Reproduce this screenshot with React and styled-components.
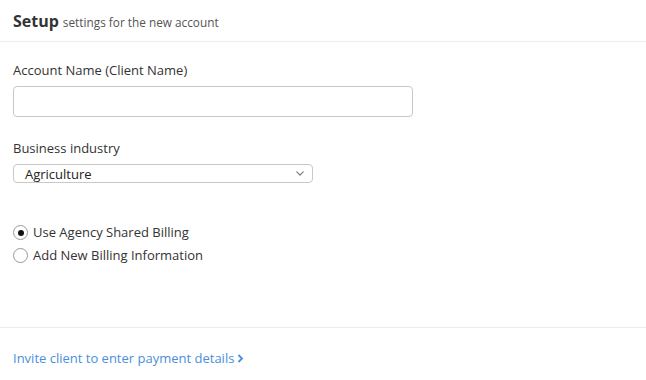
import styled, { createGlobalStyle } from 'styled-components';

const GlobalStyle = createGlobalStyle`
  html, body {
    margin: 0;
    padding: 0;
    background: #fff;
    font-family: 'Open Sans', 'Liberation Sans', sans-serif;
    color: #333;
  }
`;

const App = () => {
  return (
    <>
      <GlobalStyle />
      <Panel>
        <Header>
          <Title>Setup</Title>
          <Subtitle>settings for the new account</Subtitle>
        </Header>
        <Body>
          <Field>
            <Label>Account Name (Client Name)</Label>
            <TextInput type="text" />
          </Field>
          <Field>
            <Label>Business industry</Label>
            <SelectBox>
              <span>Agriculture</span>
              <Chevron viewBox="0 0 10 6">
                <path d="M1 1l4 4 4-4" fill="none" stroke="#777" strokeWidth="1.4" strokeLinecap="round" strokeLinejoin="round" />
              </Chevron>
            </SelectBox>
          </Field>
          <RadioGroup>
            <RadioRow>
              <Radio checked />
              <span>Use Agency Shared Billing</span>
            </RadioRow>
            <RadioRow>
              <Radio />
              <span>Add New Billing Information</span>
            </RadioRow>
          </RadioGroup>
        </Body>
        <Footer>
          <InviteLink href="#">
            Invite client to enter payment details
            <svg width="7" height="9" viewBox="0 0 7 9">
              <path d="M1.5 1l3.5 3.5-3.5 3.5" fill="none" stroke="#4a8fdb" strokeWidth="1.8" />
            </svg>
          </InviteLink>
        </Footer>
      </Panel>
    </>
  );
};

export default App;

const Panel = styled.div`
  width: 646px;
  height: 380px;
  display: flex;
  flex-direction: column;
  background: #fff;
`;

const Header = styled.div`
  display: flex;
  align-items: baseline;
  gap: 4px;
  padding: 10px 13px 9px;
  border-bottom: 1px solid #ececf0;
`;

const Title = styled.span`
  font-size: 16px;
  font-weight: 700;
  color: #333;
`;

const Subtitle = styled.span`
  font-size: 11.8px;
  color: #555;
`;

const Body = styled.div`
  flex: 1;
  padding: 19px 13px 0;
  display: flex;
  flex-direction: column;
  border-bottom: 1px solid #ececf0;
`;

const Field = styled.div`
  display: flex;
  flex-direction: column;
  gap: 6px;
  margin-bottom: 22px;
`;

const Label = styled.label`
  font-size: 13px;
  color: #333;
  line-height: 19px;
`;

const TextInput = styled.input`
  width: 400px;
  height: 31px;
  box-sizing: border-box;
  border: 1px solid #c8c8c8;
  border-radius: 4px;
  outline: none;
`;

const SelectBox = styled.div`
  width: 300px;
  height: 19px;
  box-sizing: border-box;
  border: 1px solid #c8c8c8;
  border-radius: 4px;
  display: flex;
  align-items: center;
  justify-content: space-between;
  padding: 0 8px 0 11px;
  font-size: 13px;
  color: #222;
`;

const Chevron = styled.svg`
  width: 8px;
  height: 5px;
`;

const RadioGroup = styled.div`
  display: flex;
  flex-direction: column;
  gap: 4px;
  margin-top: 18px;
`;

const RadioRow = styled.div`
  display: flex;
  align-items: center;
  gap: 5px;
  font-size: 13px;
  color: #333;
  line-height: 19px;
`;

const Radio = styled.span`
  width: 15px;
  height: 15px;
  box-sizing: border-box;
  border-radius: 50%;
  border: 1px solid #999;
  background: #fff;
  position: relative;

  &::after {
    content: '';
    display: ${p => (p.checked ? 'block' : 'none')};
    position: absolute;
    left: 3.5px;
    top: 3.5px;
    width: 6px;
    height: 6px;
    border-radius: 50%;
    background: #111;
  }
`;

const Footer = styled.div`
  height: 52px;
  padding: 21px 13px 0;
  box-sizing: border-box;
  display: flex;
  align-items: flex-start;
`;

const InviteLink = styled.a`
  font-size: 13px;
  color: #4a8fdb;
  text-decoration: none;
  display: flex;
  align-items: center;
  gap: 3px;
`;
